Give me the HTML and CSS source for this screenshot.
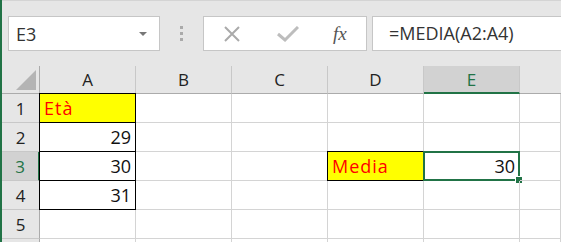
FILE: index.html
```html
<!DOCTYPE html>
<html lang="it">
<head>
  <meta charset="UTF-8">
  <title>Foglio - MEDIA</title>
  <link rel="stylesheet" href="styles.css">
</head>
<body>
  <div class="window">
    <div class="formula-bar">
      <div class="name-box">
        <span class="name-text">E3</span>
        <span class="drop-arrow"></span>
      </div>
      <div class="grip"><span></span><span></span><span></span></div>
      <div class="bar-buttons">
        <svg class="btn-icon" width="18" height="16" viewBox="0 0 18 16">
          <path d="M2 1 L16 15 M16 1 L2 15" stroke="#aaaaaa" stroke-width="2" fill="none"/>
        </svg>
        <svg class="btn-icon" width="22" height="16" viewBox="0 0 22 16">
          <path d="M1 8 L8 14 L21 1" stroke="#bdbdbd" stroke-width="3" fill="none"/>
        </svg>
        <span class="fx">fx</span>
      </div>
      <div class="formula-input">=MEDIA(A2:A4)</div>
    </div>

    <div class="sheet">
      <div class="corner"><span class="corner-tri"></span></div>
      <div class="col-head">A</div>
      <div class="col-head">B</div>
      <div class="col-head">C</div>
      <div class="col-head">D</div>
      <div class="col-head col-active">E</div>
      <div class="col-head col-rest"></div>

      <div class="row-head">1</div>
      <div class="cell boxed yellow label">Età</div>
      <div class="cell"></div><div class="cell"></div><div class="cell"></div><div class="cell"></div><div class="cell"></div>

      <div class="row-head">2</div>
      <div class="cell boxed num">29</div>
      <div class="cell"></div><div class="cell"></div><div class="cell"></div><div class="cell"></div><div class="cell"></div>

      <div class="row-head row-active">3</div>
      <div class="cell boxed num">30</div>
      <div class="cell"></div><div class="cell"></div>
      <div class="cell boxed yellow label">Media</div>
      <div class="cell num selected">30<span class="handle"></span></div>
      <div class="cell"></div>

      <div class="row-head">4</div>
      <div class="cell boxed num">31</div>
      <div class="cell"></div><div class="cell"></div><div class="cell"></div><div class="cell"></div><div class="cell"></div>

      <div class="row-head">5</div>
      <div class="cell"></div><div class="cell"></div><div class="cell"></div><div class="cell"></div><div class="cell"></div><div class="cell"></div>

      <div class="row-head"></div>
      <div class="cell"></div><div class="cell"></div><div class="cell"></div><div class="cell"></div><div class="cell"></div><div class="cell"></div>
    </div>
  </div>
</body>
</html>
```

FILE: styles.css
```css
body {
  margin: 0;
  overflow: hidden;
  font-family: "Open Sans", Arial, sans-serif;
}

.window {
  width: 561px;
  height: 242px;
  box-sizing: border-box;
  border-left: 2px solid #217346;
  background-color: #e6e6e6;
  overflow: hidden;
}

/* formula bar */
.formula-bar {
  height: 66px;
  box-sizing: border-box;
  border-top: 1px solid #d4d4d4;
  padding-top: 15px;
  display: flex;
  align-items: flex-start;
}

.name-box {
  margin-left: 6px;
  width: 152px;
  height: 35px;
  box-sizing: border-box;
  background-color: white;
  border: 1px solid #c6c6c6;
  display: flex;
  align-items: center;
  padding: 0 12px 0 7px;
}

.name-text {
  flex: 1;
  font-size: 18px;
  color: #333;
}

.drop-arrow {
  width: 0;
  height: 0;
  border-left: 4px solid transparent;
  border-right: 4px solid transparent;
  border-top: 4px solid #777;
}

.grip {
  width: 43px;
  height: 35px;
  display: flex;
  flex-direction: column;
  align-items: center;
  justify-content: center;
  gap: 3px;
}

.grip span {
  width: 3px;
  height: 3px;
  background-color: #aaaaaa;
}

.bar-buttons {
  width: 164px;
  height: 35px;
  box-sizing: border-box;
  background-color: white;
  border: 1px solid #c6c6c6;
  display: flex;
  align-items: center;
  padding-left: 19px;
  gap: 36px;
}

.fx {
  font-family: "Liberation Serif", "Times New Roman", serif;
  font-style: italic;
  font-size: 19px;
  color: #555;
  margin-left: -2px;
}

.formula-input {
  margin-left: 5px;
  flex: 1;
  height: 35px;
  box-sizing: border-box;
  background-color: white;
  border: 1px solid #c6c6c6;
  border-right: none;
  padding-left: 16px;
  font-size: 18px;
  line-height: 33px;
  color: #333;
}

/* sheet grid */
.sheet {
  display: grid;
  grid-template-columns: 38px repeat(5, 96px) 1fr;
  grid-template-rows: 28px repeat(6, 29px);
  background-color: white;
}

.corner {
  background-color: #e6e6e6;
  border-right: 1px solid #ababab;
  border-bottom: 1px solid #ababab;
  position: relative;
}

.corner-tri {
  position: absolute;
  right: 3px;
  bottom: 3px;
  width: 0;
  height: 0;
  border-left: 20px solid transparent;
  border-bottom: 20px solid #b4b4b4;
}

.col-head {
  background-color: #e6e6e6;
  border-right: 1px solid #c8c8c8;
  border-bottom: 1px solid #ababab;
  display: flex;
  align-items: center;
  justify-content: center;
  font-size: 17px;
  color: #222;
}

.col-rest {
  border-right: none;
}

.col-active {
  background-color: #d2d2d2;
  color: #217346;
  border-bottom: 2px solid #217346;
}

.row-head {
  background-color: #e6e6e6;
  border-right: 1px solid #ababab;
  border-bottom: 1px solid #c8c8c8;
  display: flex;
  align-items: center;
  justify-content: center;
  font-size: 17px;
  color: #222;
}

.row-active {
  background-color: #d2d2d2;
  color: #217346;
  border-right: 2px solid #217346;
}

.cell {
  border-right: 1px solid #d4d4d4;
  border-bottom: 1px solid #d4d4d4;
  display: flex;
  align-items: center;
  font-size: 18px;
  color: #111;
  position: relative;
}

.boxed {
  border: 1px solid #000;
  margin: -1px 0 0 -1px;
}

.yellow {
  background-color: #ffff00;
}

.label {
  color: #ff0000;
  padding-left: 4px;
  letter-spacing: 1px;
}

.num {
  justify-content: flex-end;
  padding-right: 4px;
}

.selected {
  border: 2px solid #217346;
  margin: -1px 0 0 -1px;
  padding-right: 3px;
}

.handle {
  position: absolute;
  right: -5px;
  bottom: -5px;
  width: 6px;
  height: 6px;
  background-color: #217346;
  border: 1px solid white;
}
```
